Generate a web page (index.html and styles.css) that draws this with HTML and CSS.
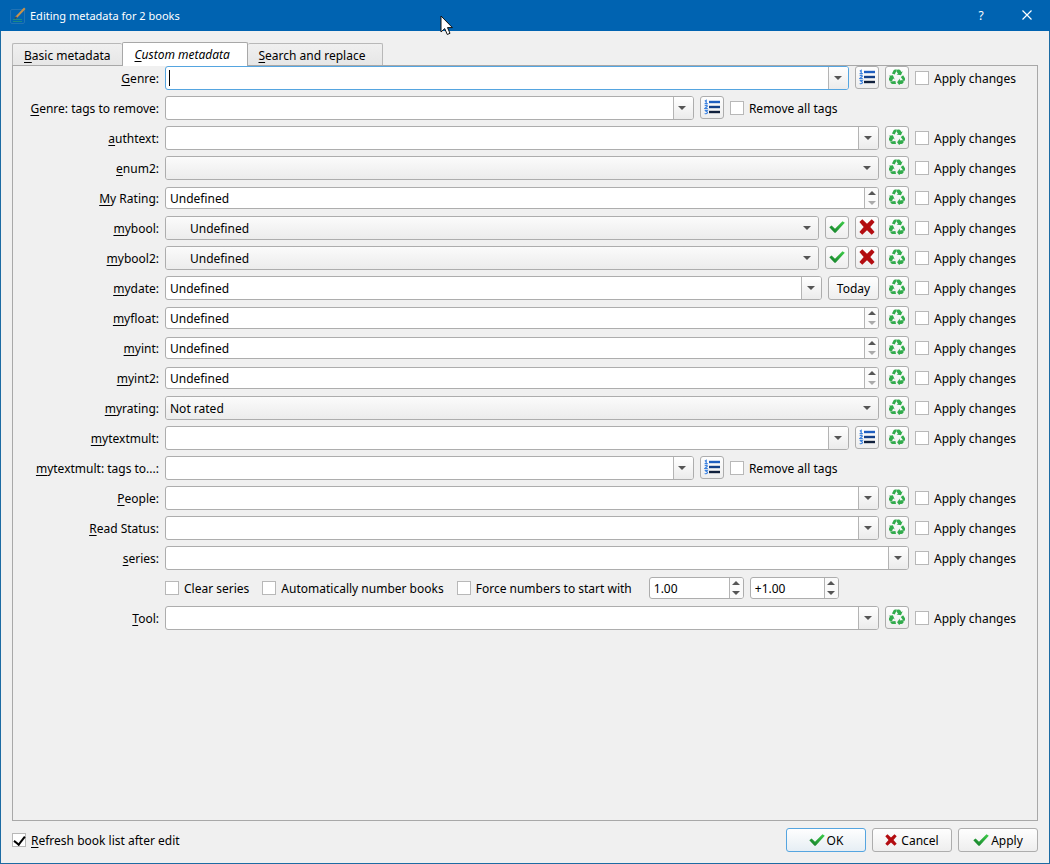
FILE: index.html
```html
<!DOCTYPE html>
<html lang="en">
<head>
    <meta charset="UTF-8">
    <meta name="viewport" content="width=device-width, initial-scale=1.0">
    <title>Editing metadata for 2 books</title>
    <link rel="stylesheet" href="styles.css">
</head>
<body>
    <svg class="defs" aria-hidden="true">
        <symbol id="icon-recycle" viewBox="0 0 24 24">
            <g id="recycle-arm">
                <path d="M4.400 6.600 6.800 2.300Q7.800.700 9.600.700H11.600L11.900 1.400 8.600 8.200z"/>
                <path d="M12.600.700H14.600Q16.400.700 17.300 2.300L18.500 4.400 20.600 3.200 18 9.200 11.200 8.300 13.600 7 11.100 3.800z"/>
            </g>
            <use href="#recycle-arm" transform="rotate(120 12 12.800)"/>
            <use href="#recycle-arm" transform="rotate(240 12 12.800)"/>
        </symbol>
        <symbol id="icon-list" viewBox="0 0 16 16">
            <path d="M5 3h11" stroke="#1f5fc0" stroke-width="2.400"/>
            <path d="M5 8h11" stroke="#123f88" stroke-width="2.400"/>
            <path d="M5 13h11" stroke="#10203c" stroke-width="2.400"/>
            <path d="M.8 2.200 2.200 1.300V4.500M.6 4.700h3.200M.7 6.800Q3.300 5.800 3.300 7.300L.9 9.500H3.800M.7 11.300H3.300L2.200 12.500Q3.800 12.800 3.300 14Q2.500 15.200.7 14.500" fill="none" stroke="#3c82e0" stroke-width="1.200"/>
        </symbol>
        <symbol id="icon-ok" viewBox="0 0 16 16">
            <path d="M.3 8.300 2.600 6.500 6 9.800 13.500 2.200 15.800 3.700 6.600 13.800 5.500 13.800z" fill="url(#green)"/>
        </symbol>
        <symbol id="icon-no" viewBox="0 0 16 16">
            <path d="M.4 3 3.300.200 8 4.700 12.700.200 15.600 3 11.300 8 15.600 13 12.700 15.800 8 11.300 3.300 15.800.4 13 4.700 8z" fill="#b30c10"/>
        </symbol>
        <linearGradient id="green" x1="0" y1="1" x2="1" y2="0">
            <stop offset="0" stop-color="#137a2a"/>
            <stop offset="1" stop-color="#3fd04a"/>
        </linearGradient>
    </svg>

    <header class="titlebar">
        <svg class="app-icon" viewBox="0 0 18 18" aria-hidden="true">
            <rect x="1.500" y="2.500" width="14" height="14" rx="1.500" fill="none" stroke="#2273b4"/>
            <path d="M4 12.500h9M4 14.500h9" stroke="#1a8a86"/>
            <path d="M7 10.500 15.800 1.300" stroke="#c8924a" stroke-width="2"/>
            <path d="M5.800 11.600 7.600 9.900" stroke="#3a4a58" stroke-width="1.500"/>
        </svg>
        <h1>Editing metadata for 2 books</h1>
        <button class="title-btn" type="button" aria-label="Help">?</button>
        <button class="title-btn" type="button" aria-label="Close">
            <svg width="10" height="10" viewBox="0 0 10 10"><path d="M.5.5l9 9M9.500.5l-9 9" stroke="#fff" stroke-width="1.200" fill="none"/></svg>
        </button>
        <svg class="pointer" viewBox="0 0 13 21" aria-hidden="true">
            <path d="M1 1V17L4.700 13.600 7.300 19.500 10 18.300 7.500 12.600H12.400z" fill="#fff" stroke="#111"/>
        </svg>
    </header>

    <form class="dialog">
        <nav class="tabs">
            <a class="tab" href="#basic"><u>B</u>asic metadata</a>
            <a class="tab active" href="#custom"><u>C</u>ustom metadata</a>
            <a class="tab last" href="#search"><u>S</u>earch and replace</a>
        </nav>

        <main class="panel" id="custom">
            <div class="row">
                <label class="name" for="genre"><u>G</u>enre:</label>
                <div class="combo focus"><span class="caret"></span><input id="genre" type="text"><button type="button" aria-label="Show genres"></button></div>
                <button class="tool" type="button" aria-label="Edit list"><svg><use href="#icon-list"/></svg></button>
                <button class="tool recycle" type="button" aria-label="Clear"><svg><use href="#icon-recycle"/></svg></button>
                <label class="check apply"><input type="checkbox">Apply changes</label>
            </div>
            <div class="row">
                <label class="name" for="genre-remove"><u>G</u>enre: tags to remove:</label>
                <div class="combo tags"><input id="genre-remove" type="text"><button type="button" aria-label="Show tags"></button></div>
                <button class="tool" type="button" aria-label="Edit list"><svg><use href="#icon-list"/></svg></button>
                <label class="check remove"><input type="checkbox">Remove all tags</label>
            </div>
            <div class="row">
                <label class="name" for="authtext"><u>a</u>uthtext:</label>
                <div class="combo"><input id="authtext" type="text"><button type="button" aria-label="Show values"></button></div>
                <button class="tool recycle" type="button" aria-label="Clear"><svg><use href="#icon-recycle"/></svg></button>
                <label class="check apply"><input type="checkbox">Apply changes</label>
            </div>
            <div class="row">
                <label class="name" for="enum2"><u>e</u>num2:</label>
                <div class="select"><select id="enum2"><option></option></select></div>
                <button class="tool recycle" type="button" aria-label="Clear"><svg><use href="#icon-recycle"/></svg></button>
                <label class="check apply"><input type="checkbox">Apply changes</label>
            </div>
            <div class="row">
                <label class="name" for="my-rating"><u>M</u>y Rating:</label>
                <div class="spin at-min"><input id="my-rating" type="text" value="Undefined"><span class="arrows"><button type="button" aria-label="Up"></button><button type="button" aria-label="Down"></button></span></div>
                <button class="tool recycle" type="button" aria-label="Clear"><svg><use href="#icon-recycle"/></svg></button>
                <label class="check apply"><input type="checkbox">Apply changes</label>
            </div>
            <div class="row">
                <label class="name" for="mybool"><u>m</u>ybool:</label>
                <div class="select indent"><select id="mybool"><option>Undefined</option></select></div>
                <button class="tool" type="button" aria-label="Yes"><svg><use href="#icon-ok"/></svg></button>
                <button class="tool" type="button" aria-label="No"><svg><use href="#icon-no"/></svg></button>
                <button class="tool recycle" type="button" aria-label="Clear"><svg><use href="#icon-recycle"/></svg></button>
                <label class="check apply"><input type="checkbox">Apply changes</label>
            </div>
            <div class="row">
                <label class="name" for="mybool2"><u>m</u>ybool2:</label>
                <div class="select indent"><select id="mybool2"><option>Undefined</option></select></div>
                <button class="tool" type="button" aria-label="Yes"><svg><use href="#icon-ok"/></svg></button>
                <button class="tool" type="button" aria-label="No"><svg><use href="#icon-no"/></svg></button>
                <button class="tool recycle" type="button" aria-label="Clear"><svg><use href="#icon-recycle"/></svg></button>
                <label class="check apply"><input type="checkbox">Apply changes</label>
            </div>
            <div class="row">
                <label class="name" for="mydate"><u>m</u>ydate:</label>
                <div class="combo"><input id="mydate" type="text" value="Undefined"><button type="button" aria-label="Show calendar"></button></div>
                <button class="today" type="button">Today</button>
                <button class="tool recycle" type="button" aria-label="Clear"><svg><use href="#icon-recycle"/></svg></button>
                <label class="check apply"><input type="checkbox">Apply changes</label>
            </div>
            <div class="row">
                <label class="name" for="myfloat"><u>m</u>yfloat:</label>
                <div class="spin at-min"><input id="myfloat" type="text" value="Undefined"><span class="arrows"><button type="button" aria-label="Up"></button><button type="button" aria-label="Down"></button></span></div>
                <button class="tool recycle" type="button" aria-label="Clear"><svg><use href="#icon-recycle"/></svg></button>
                <label class="check apply"><input type="checkbox">Apply changes</label>
            </div>
            <div class="row">
                <label class="name" for="myint"><u>m</u>yint:</label>
                <div class="spin at-min"><input id="myint" type="text" value="Undefined"><span class="arrows"><button type="button" aria-label="Up"></button><button type="button" aria-label="Down"></button></span></div>
                <button class="tool recycle" type="button" aria-label="Clear"><svg><use href="#icon-recycle"/></svg></button>
                <label class="check apply"><input type="checkbox">Apply changes</label>
            </div>
            <div class="row">
                <label class="name" for="myint2"><u>m</u>yint2:</label>
                <div class="spin at-min"><input id="myint2" type="text" value="Undefined"><span class="arrows"><button type="button" aria-label="Up"></button><button type="button" aria-label="Down"></button></span></div>
                <button class="tool recycle" type="button" aria-label="Clear"><svg><use href="#icon-recycle"/></svg></button>
                <label class="check apply"><input type="checkbox">Apply changes</label>
            </div>
            <div class="row">
                <label class="name" for="myrating"><u>m</u>yrating:</label>
                <div class="select"><select id="myrating"><option>Not rated</option></select></div>
                <button class="tool recycle" type="button" aria-label="Clear"><svg><use href="#icon-recycle"/></svg></button>
                <label class="check apply"><input type="checkbox">Apply changes</label>
            </div>
            <div class="row">
                <label class="name" for="mytextmult"><u>m</u>ytextmult:</label>
                <div class="combo"><input id="mytextmult" type="text"><button type="button" aria-label="Show values"></button></div>
                <button class="tool" type="button" aria-label="Edit list"><svg><use href="#icon-list"/></svg></button>
                <button class="tool recycle" type="button" aria-label="Clear"><svg><use href="#icon-recycle"/></svg></button>
                <label class="check apply"><input type="checkbox">Apply changes</label>
            </div>
            <div class="row">
                <label class="name" for="mytextmult-remove"><u>m</u>ytextmult: tags to...:</label>
                <div class="combo tags"><input id="mytextmult-remove" type="text"><button type="button" aria-label="Show tags"></button></div>
                <button class="tool" type="button" aria-label="Edit list"><svg><use href="#icon-list"/></svg></button>
                <label class="check remove"><input type="checkbox">Remove all tags</label>
            </div>
            <div class="row">
                <label class="name" for="people"><u>P</u>eople:</label>
                <div class="combo"><input id="people" type="text"><button type="button" aria-label="Show values"></button></div>
                <button class="tool recycle" type="button" aria-label="Clear"><svg><use href="#icon-recycle"/></svg></button>
                <label class="check apply"><input type="checkbox">Apply changes</label>
            </div>
            <div class="row">
                <label class="name" for="read-status"><u>R</u>ead Status:</label>
                <div class="combo"><input id="read-status" type="text"><button type="button" aria-label="Show values"></button></div>
                <button class="tool recycle" type="button" aria-label="Clear"><svg><use href="#icon-recycle"/></svg></button>
                <label class="check apply"><input type="checkbox">Apply changes</label>
            </div>
            <div class="row">
                <label class="name" for="series"><u>s</u>eries:</label>
                <div class="combo"><input id="series" type="text"><button type="button" aria-label="Show series"></button></div>
                <label class="check apply"><input type="checkbox">Apply changes</label>
            </div>
            <div class="row">
                <span class="name"></span>
                <div class="series-options">
                    <label class="check"><input type="checkbox">Clear series</label>
                    <label class="check"><input type="checkbox">Automatically number books</label>
                    <label class="check"><input type="checkbox">Force numbers to start with</label>
                    <div class="numbers">
                        <div class="spin start"><input type="text" value="1.00" aria-label="Start number"><span class="arrows"><button type="button" aria-label="Up"></button><button type="button" aria-label="Down"></button></span></div>
                        <div class="spin step"><input type="text" value="+1.00" aria-label="Increment"><span class="arrows"><button type="button" aria-label="Up"></button><button type="button" aria-label="Down"></button></span></div>
                    </div>
                </div>
            </div>
            <div class="row">
                <label class="name" for="tool"><u>T</u>ool:</label>
                <div class="combo"><input id="tool" type="text"><button type="button" aria-label="Show values"></button></div>
                <button class="tool recycle" type="button" aria-label="Clear"><svg><use href="#icon-recycle"/></svg></button>
                <label class="check apply"><input type="checkbox">Apply changes</label>
            </div>
        </main>

        <footer class="footer">
            <label class="check"><input type="checkbox" checked><span><u>R</u>efresh book list after edit</span></label>
            <div class="actions">
                <button class="default" type="button"><svg><use href="#icon-ok"/></svg><span>OK</span></button>
                <button class="cancel" type="button"><svg><use href="#icon-no"/></svg><span>Cancel</span></button>
                <button type="button"><svg><use href="#icon-ok"/></svg><span>Apply</span></button>
            </div>
        </footer>
    </form>
</body>
</html>
```
FILE: styles.css
```css
* {
    box-sizing: border-box;
}
body {
    margin: 0;
    min-height: 100vh;
    display: flex;
    flex-direction: column;
    background-color: #f0f0f0;
    color: #000;
    font-family: "Noto Sans", sans-serif;
    font-size: 12px;
    line-height: 16px;
}
button, input, select {
    font: inherit;
    color: inherit;
    margin: 0;
    padding: 0;
}
u {
    text-underline-offset: 2px;
}
.defs {
    position: absolute;
    width: 0;
    height: 0;
}

/* title bar */
.titlebar {
    position: relative;
    display: flex;
    align-items: center;
    height: 31px;
    padding-left: 9px;
    background-color: #0063b1;
    color: #fff;
}
.titlebar h1 {
    flex: 1;
    margin: 0 0 0 3px;
    font-size: 11px;
    font-weight: normal;
}
.app-icon {
    width: 18px;
    height: 18px;
}
.title-btn {
    width: 46px;
    height: 31px;
    border: none;
    background: none;
}
.pointer {
    position: absolute;
    left: 440px;
    top: 15px;
    width: 13px;
    height: 21px;
}

.dialog {
    flex: 1;
    display: flex;
    flex-direction: column;
    padding: 11px;
    border: 1px solid #1c6ba3;
    border-top: none;
}

/* tabs */
.tabs {
    display: flex;
    align-items: flex-end;
    height: 24px;
    margin-bottom: -1px;
    z-index: 1;
}
.tab {
    height: 22px;
    margin-bottom: 1px;
    padding: 4px 11px 0;
    border: 1px solid #b8b8b8;
    border-left: none;
    border-bottom: none;
    border-radius: 2px 2px 0 0;
    background: linear-gradient(#f0f0f0, #e6e6e6);
    color: #000;
    text-decoration: none;
}
.tab:first-child {
    border-left: 1px solid #b8b8b8;
    border-right: none;
}
.tab.active {
    min-width: 126px;
    height: 24px;
    margin-bottom: 0;
    padding-left: 12px;
    border: 1px solid #a8a8a8;
    border-bottom: none;
    background: #fff;
    font-style: italic;
}
.tab.last {
    min-width: 135px;
}
.panel {
    flex: 1;
    display: flex;
    flex-direction: column;
    gap: 6px;
    padding-right: 6px;
    border: 1px solid #a8a8a8;
}

/* rows */
.row {
    display: flex;
    align-items: center;
    gap: 6px;
    height: 24px;
}
.name {
    flex: 0 0 146px;
    padding-top: 2px;
    text-align: right;
    white-space: nowrap;
}
.combo, .spin, .select {
    position: relative;
    display: flex;
    flex: 1;
    min-width: 0;
    height: 24px;
    border: 1px solid #adadad;
    border-radius: 3px;
    background-color: #fff;
    overflow: hidden;
}
.combo input, .spin input {
    flex: 1;
    min-width: 0;
    padding: 2px 4px 0;
    border: none;
    outline: none;
    background: none;
}
.combo button {
    display: flex;
    align-items: center;
    justify-content: center;
    width: 20px;
    padding-right: 2px;
    border: none;
    border-left: 1px solid #b4b4b4;
    background: linear-gradient(#fff, #ebebeb);
}
.combo button::after, .select::after {
    content: "";
    border: 4px solid transparent;
    border-top: 4px solid #555;
    border-bottom: none;
}
.combo.focus {
    border-color: #55a5e0;
}
.caret {
    position: absolute;
    left: 3px;
    top: 3px;
    width: 1px;
    height: 16px;
    background-color: #000;
}
.select select {
    flex: 1;
    appearance: none;
    padding: 2px 4px 0;
    border: none;
    background: linear-gradient(#fbfbfb, #ececec);
}
.select.indent select {
    padding-left: 24px;
}
.select::after {
    position: absolute;
    right: 7px;
    top: 9px;
}
.spin {
    height: 22px;
}
.arrows {
    display: flex;
    flex-direction: column;
    width: 14px;
    border-left: 1px solid #b4b4b4;
}
.arrows button {
    flex: 1;
    display: flex;
    align-items: center;
    justify-content: center;
    border: none;
    background: #fafafa;
}
.arrows button::after {
    content: "";
    border: 4px solid transparent;
    border-bottom-color: #555;
    border-top: none;
}
.arrows button:last-child::after {
    border: 4px solid transparent;
    border-top-color: #555;
    border-bottom: none;
}
.at-min .arrows button:last-child::after {
    border-top-color: #aaa;
}
.combo.tags {
    flex: 7 1 0;
}
.check.remove {
    flex: 4 1 0;
}
.check.apply {
    flex: 0 0 116px;
}

.tool, .today, .actions button {
    display: flex;
    align-items: center;
    justify-content: center;
    height: 24px;
    border: 1px solid #adadad;
    border-radius: 3px;
    background: linear-gradient(#fefefe, #eee);
}
.tool {
    flex: 0 0 24px;
    align-self: flex-start;
    height: 23px;
    padding-bottom: 1px;
}
.tool svg {
    width: 16px;
    height: 16px;
}
.recycle {
    fill: #31ab4c;
}
.today {
    flex: 0 0 51px;
    padding-top: 2px;
}

.check {
    display: flex;
    align-items: center;
    gap: 5px;
    padding-top: 2px;
    white-space: nowrap;
}
.check input {
    appearance: none;
    display: flex;
    align-items: center;
    justify-content: center;
    width: 14px;
    height: 14px;
    margin-bottom: 2px;
    border: 1px solid #b8b8b8;
    background-color: #fff;
}
.check input:checked::after {
    content: "";
    flex: none;
    width: 5px;
    height: 9px;
    margin-bottom: 2px;
    border: solid #000;
    border-width: 0 2px 2px 0;
    transform: rotate(38deg);
}
.series-options {
    display: flex;
    align-items: center;
    gap: 13px;
}
.numbers {
    display: flex;
    gap: 6px;
    margin-left: 4px;
}
.spin.start {
    flex: 0 0 95px;
}
.spin.step {
    flex: 0 0 89px;
}

/* bottom bar */
.footer {
    display: flex;
    align-items: center;
    justify-content: space-between;
    margin-top: 7px;
}
.actions {
    display: flex;
    gap: 6px;
}
.actions button {
    width: 80px;
    gap: 2px;
}
.actions span {
    padding-top: 2px;
}
.actions svg {
    width: 16px;
    height: 16px;
}
.actions .cancel {
    gap: 4px;
}
.actions .cancel svg {
    width: 12px;
    height: 12px;
}
.actions .default {
    border-color: #55a5e0;
    background: linear-gradient(#fefefe, #e6eef4);
}
```
